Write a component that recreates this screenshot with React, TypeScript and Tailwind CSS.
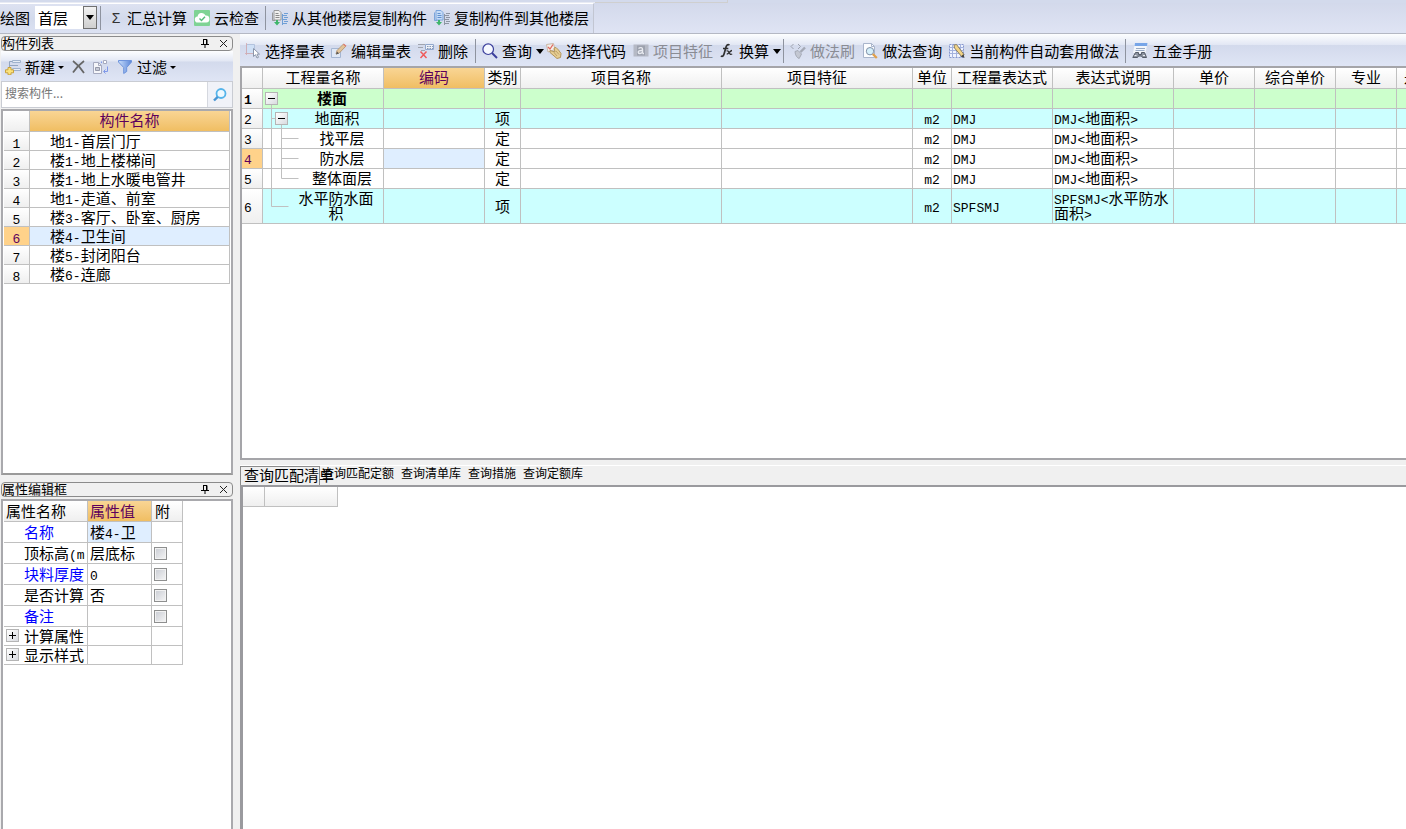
import React, { ReactNode } from "react";

const SANS = "font-['Noto_Sans_CJK_SC',sans-serif]";

/* Latin runs in grid text use half-width monospaced characters. */
function Mixed({ text }: { text: string }) {
  const parts = text.split(/([\x20-\x7e]+)/).filter(Boolean);
  return (
    <>
      {parts.map((p, i) =>
        /^[\x20-\x7e]+$/.test(p) ? (
          <span key={i} className="font-['Liberation_Mono',monospace] text-[13px] leading-[8px]">{p}</span>
        ) : (
          <span key={i}>{p}</span>
        )
      )}
    </>
  );
}

function Svg({ children, size = 16 }: { children: ReactNode; size?: number }) {
  return (
    <svg width={size} height={size} viewBox="0 0 16 16" fill="none" className="shrink-0" aria-hidden="true">
      {children}
    </svg>
  );
}

const Caret = ({ small }: { small?: boolean }) => (
  <svg width={small ? 6 : 8} height={small ? 3 : 5} viewBox="0 0 8 5" preserveAspectRatio="none" className="shrink-0" aria-hidden="true">
    <path d="M0 0h8L4 5z" fill="#000" />
  </svg>
);

const CloudIcon = () => (
  <Svg>
    <rect width="16" height="16" rx="1" fill="#7fd394" />
    <path d="M4 12.500a3 3 0 0 1-.4-6A4.200 4.200 0 0 1 11.600 5.500a3.500 3.500 0 0 1 .6 7z" fill="#fff" />
    <path d="M5.500 8.500l2 2 3.500-3.800" stroke="#55bb78" strokeWidth="1.400" />
  </Svg>
);

const CopyFloorIcon = ({ blue }: { blue?: boolean }) => (
  <Svg>
    <path d="M2 .5h5l2 2V10H2z" fill={blue ? "#c6dcf7" : "#f0f0ee"} stroke={blue ? "#7ba5dc" : "#999"} />
    <path d="M.5 2.500v8h3" stroke={blue ? "#7ba5dc" : "#999"} />
    <path d="M3.500 3.500h3M3.500 5.500h4M3.500 7.500h4" stroke={blue ? "#5f8fce" : "#8a8a8a"} />
    <path d="M4 10h2v2h2l-3 3.500L2 12h2z" fill="#3fb56b" />
    <path d="M10.500 4v11M12 3.500h4M11 5.500h4M12 7.500h4M11 9.500h4M12 11.500h4M11 13.500h4" stroke={blue ? "#8d95a3" : "#6f9fd6"} />
  </Svg>
);

const NewIcon = () => (
  <Svg>
    <path d="M7.500 1.500h8v2h-8zM7.500 9.500h8v2h-8z" fill="#e7edf6" stroke="#a0b2cc" />
    <path d="M7 2.500H4.500v6M4.500 6.500H13" stroke="#93a5c0" />
    <path d="M3 8.500h3v2.300h2.500v3H6v2H3v-2H.5v-3H3z" fill="#fbe37c" stroke="#c9a23c" />
  </Svg>
);

const CopyIcon = () => (
  <Svg>
    <path d="M.5 3.500h5l3 3v8h-8z" fill="#f4f5f9" stroke="#a6aabf" />
    <path d="M5.500 3.500v3h3" stroke="#a6aabf" />
    <path d="M2.500 8.500h4v3h-4z" fill="#c7cad6" stroke="#9599aa" />
    <path d="M10.500 1.500h3v3h-3z" fill="#fff" stroke="#a6aabf" />
    <path d="M8.500 4V2.500M14.500 7.500v5h-3.500M12.500 10.500l-2 2 2 2" stroke="#7f98e8" />
  </Svg>
);

const FilterIcon = () => (
  <Svg>
    <defs>
      <linearGradient id="funnel" x1="0" x2="1">
        <stop offset="0" stopColor="#c6dcfb" />
        <stop offset="1" stopColor="#5b86d8" />
      </linearGradient>
    </defs>
    <path d="M1.500 1.500h13v1.500L9.700 8.500v4l-3 2v-6L1.500 3z" fill="url(#funnel)" stroke="#6d93dc" />
  </Svg>
);

const SelectTableIcon = () => (
  <Svg>
    <path d="M1.500 1.500h8v9h-8z" fill="#cfe0f6" stroke="#b3c3de" />
    <path d="M1.500 0v12M0 10.500h9" stroke="#d3a9ae" strokeWidth=".8" />
    <path d="M8.500 5.500v8l2-1.800 1.500 3.300 1.500-.7-1.500-3.200h2.500z" fill="#fff" stroke="#8b96aa" />
  </Svg>
);

const EditIcon = () => (
  <Svg>
    <path d="M.5 5.500h9v9h-9z" fill="#dfe8f6" stroke="#a5b6d2" />
    <path d="M5 11l1-3.500L12.500 1l2.300 2.200L8.300 10z" fill="#e2c49a" stroke="#b08f6a" strokeWidth=".8" />
    <path d="M5 11.500l1-3 2 2z" fill="#555" />
    <path d="M12 1.500L13 .7l2.500 2-.9 1z" fill="#df7c72" />
  </Svg>
);

const DeleteIcon = () => (
  <Svg>
    <path d="M0 1.500h7M0 4.500h5M3 7.500h4" stroke="#a0a4ae" />
    <path d="M7.500 1.500h8v5h-8z" fill="#edf1f8" stroke="#92a8cd" />
    <path d="M9 3.500h6M9 5.500h6" stroke="#8797b5" strokeDasharray="1.500 1" />
    <path d="M2.500 8.500l6 6.500M8.500 8.500l-6 6.500" stroke="#ef5a5a" strokeWidth="1.500" />
  </Svg>
);

const SearchIcon = ({ light }: { light?: boolean }) =>
  light ? (
    <Svg>
      <circle cx="9" cy="6.500" r="4.500" fill="#eef9ff" stroke="#55b4ea" strokeWidth="1.800" />
      <path d="M5.700 9.800L2 13.500" stroke="#4795d3" strokeWidth="2.400" />
    </Svg>
  ) : (
    <Svg>
      <circle cx="6.200" cy="6.200" r="5.300" fill="#f5f8ff" stroke="#3b3f9c" strokeWidth="1.200" />
      <path d="M10 10l5 5" stroke="#3b3f9c" strokeWidth="2" />
    </Svg>
  );

const CodeIcon = () => (
  <Svg>
    <path d="M.5 1.500l7-1 1.500 6-7 2.500z" fill="#f4eee8" stroke="#c9b7a7" />
    <path d="M2 4l2 2 3-4.500" stroke="#e0685e" strokeWidth="1.300" />
    <path d="M4 7.500l5 1.500-1-4 2-.5 2.500 2.500 2.500 3.500-.5 4-3.500 1-7-6z" fill="#e6cd92" stroke="#b3955c" />
    <path d="M8 9.500l3 3.500M10 8l3 3.500" stroke="#b3955c" strokeWidth=".8" />
  </Svg>
);

const FeatureIcon = () => (
  <Svg>
    <path d="M.5 1.500h15v12H.5z" fill="#b5b9c5" />
    <path d="M4 2.500h8v10H4z" fill="#9ca1ae" />
    <path d="M5.500 5.500c2-1.500 4-1 4 .8v4.200M9.500 7.500c-3-.2-4.500.6-4.200 2 .3 1.500 2.800 1.300 4.200-.3M9.500 10.500h1.500" stroke="#e8eaf0" strokeWidth="1.400" />
  </Svg>
);

const FxIcon = () => (
  <Svg>
    <path d="M10.500 2C8.500.8 7.300 2.500 6.600 5.500l-1.400 5c-.6 2.500-1.600 3.300-3.400 2.500M4 5.500h5.300" stroke="#303030" strokeWidth="1.700" />
    <path d="M7.500 8c1.800-.6 2.200.4 2.700 1.700s1.200 2 3 1.300M13 7.500c-2 0-3 3.500-5.300 3.700" stroke="#303030" strokeWidth="1.300" />
  </Svg>
);

const BrushIcon = () => (
  <Svg>
    <path d="M3.500 1L1 3.500 3.500 6M8 1l2.500 2.500L8 6" stroke="#9da2ae" />
    <path d="M15 4.500L10.500 9" stroke="#a4a9b5" strokeWidth="2.400" />
    <path d="M5 8.500l3-1 3.500 3.500-2.300 4.500c-2-.5-4-3-4.200-7z" fill="#c3c7d2" stroke="#a4a9b5" />
  </Svg>
);

const MethodQueryIcon = () => (
  <Svg>
    <path d="M1.500.5h8l3 3v11h-11z" fill="#fcfdff" stroke="#a9b5cb" />
    <path d="M9.500.5v3h3" stroke="#a9b5cb" />
    <circle cx="8" cy="8.200" r="3.700" fill="#d5effa" stroke="#8291a8" />
    <path d="M10.800 11l4 4" stroke="#e0a04b" strokeWidth="2.400" />
  </Svg>
);

const AutoIcon = () => (
  <Svg>
    <path d="M.5 1.500h14v13H.5z" fill="#eff3ff" stroke="#8596ce" strokeDasharray="2 1" />
    <path d="M0 4.500h15M0 7.500h15M0 10.500h15M3.500 1v13M7.500 1v13M11.500 1v13" stroke="#a3b2dd" />
    <path d="M5 2l2.500-.5L15 11.500l-2 2.500L5.500 5z" fill="#f1d385" stroke="#8a8068" />
    <path d="M12 13.500L14.500 11l1 4z" fill="#444" />
  </Svg>
);

const HardwareIcon = () => (
  <Svg>
    <path d="M3 0h12.500l-2 10H1z" fill="#f3f6fb" />
    <path d="M3 0h12.500L15 3H2.500z" fill="#77a5e8" />
    <path d="M4 5.500h9M3.500 7.500h9" stroke="#98a9c3" />
    <path d="M3.500 9.500h3v2h3v-2h3l2 5h-4l-1-1.500h-3L5.500 14.500H.8z" fill="#8d94a1" stroke="#555c68" />
    <path d="M2.500 12.500h2M11 12.500h2" stroke="#e8ecf2" />
  </Svg>
);

const Sep = () => <span className="h-6 w-px shrink-0 bg-[#8e939f]" />;

const BAR = "bg-[linear-gradient(#fdfeff_0%,#e2e7f4_34%,#d3daec_36%,#dfe5f5_100%)]";

function Tool({ icon, label, caret, small, disabled }: { icon?: ReactNode; label: string; caret?: boolean; small?: boolean; disabled?: boolean }) {
  return (
    <button
      type="button"
      disabled={disabled}
      className={`flex shrink-0 items-center whitespace-nowrap text-[15px] leading-5 ${disabled ? "text-[#8a8c94]" : "text-black"}`}
    >
      {icon}
      <span className={icon ? "ml-1" : ""}>{label}</span>
      {caret && <span className={small ? "ml-[3px] flex" : "ml-1 flex"}><Caret small={small} /></span>}
    </button>
  );
}

function PanelTitle({ title }: { title: string }) {
  return (
    <header className="flex h-[15px] shrink-0 items-center rounded-sm border border-[#8b8b8b] bg-[#f0f0f0] text-[13px] leading-[13px]">
      <h2 className="grow pb-[2px]">{title}</h2>
      <button type="button" aria-label="固定" className="mr-2.5">
        <svg width="8" height="9" viewBox="0 0 8 9" fill="none" className="block">
          <path d="M2 .5h4v5M2.500 0v6M5.500 0v6M0 5.500h8M4 6v3" stroke="#000" />
        </svg>
      </button>
      <button type="button" aria-label="关闭" className="mr-1">
        <svg width="9" height="9" viewBox="0 0 9 9" fill="none" className="block">
          <path d="M1 1l7 7M8 1l-7 7" stroke="#222" />
        </svg>
      </button>
    </header>
  );
}

const components = ["地1-首层门厅", "楼1-地上楼梯间", "楼1-地上水暖电管井", "地1-走道、前室", "楼3-客厅、卧室、厨房", "楼4-卫生间", "楼5-封闭阳台", "楼6-连廊"];

const HEAD = "bg-linear-to-b from-white to-[#efefef]";
const GOLD = "bg-linear-to-b from-[#f9d594] to-[#f0be62] text-[#5c005c]";
const LINE = "border-[#c0c0c0]";

function ComponentPanel() {
  return (
    <section className="flex h-[441px] shrink-0 flex-col pt-[2px]">
      <PanelTitle title="构件列表" />
      <div className={`flex h-[30px] shrink-0 items-center pt-[2px] pl-1 ${BAR}`}>
        <Tool icon={<NewIcon />} label="新建" caret small />
        <button type="button" aria-label="删除构件" className="ml-2">
          <svg width="13" height="14" viewBox="0 0 13 14" fill="none" className="block">
            <path d="M1 1c4 3 8 7 11 12M12 1C8 4 4 8 1 12.500" stroke="#666" strokeWidth="1.700" />
          </svg>
        </button>
        <button type="button" aria-label="复制构件" className="mx-2"><CopyIcon /></button>
        <Tool icon={<FilterIcon />} label="过滤" caret small />
      </div>
      <div className="flex h-[27px] shrink-0 items-stretch border border-[#c9ccd3] bg-[#f0f2f8]">
        <input
          type="text"
          aria-label="搜索构件"
          placeholder="搜索构件..."
          className="w-0 grow border-r border-[#d5d8df] bg-white pb-1 pl-[3px] text-[12px] leading-4 outline-none placeholder:text-[#777]"
        />
        <button type="button" aria-label="搜索" className="flex w-6 items-center justify-center"><SearchIcon light /></button>
      </div>
      <div className="mt-px grow border-2 border-[#a9a9ad] border-b-[#9a9a9a] bg-white px-px">
        <table className="w-full table-fixed border-separate border-spacing-0 text-[15px] leading-[15px]">
          <colgroup><col className="w-[26px]" /><col /></colgroup>
          <thead>
            <tr className="h-[21px]">
              <th className={`border-r border-b p-0 ${LINE} ${HEAD}`} />
              <th className={`border-r border-b px-0 pt-0 pb-[3px] font-normal ${LINE} ${GOLD}`}>构件名称</th>
            </tr>
          </thead>
          <tbody>
            {components.map((c, i) => (
              <tr key={c} className="h-[19px]">
                <td className={`border-r border-b p-0 text-center ${LINE} ${i === 5 ? "bg-[#ffd28a] text-[#5c005c]" : HEAD}`}><Mixed text={String(i + 1)} /></td>
                <td className={`border-r border-b pt-0 pr-0 pb-px pl-5 whitespace-nowrap ${LINE} ${i === 5 ? "bg-[#dfeeff]" : ""}`}><Mixed text={c} /></td>
              </tr>
            ))}
          </tbody>
        </table>
      </div>
    </section>
  );
}

type Prop = { name: string; value: string; blue?: boolean; check?: boolean; group?: boolean; active?: boolean };
const props: Prop[] = [
  { name: "名称", value: "楼4-卫", blue: true, active: true },
  { name: "顶标高(m", value: "层底标", check: true },
  { name: "块料厚度", value: "0", blue: true, check: true },
  { name: "是否计算", value: "否", check: true },
  { name: "备注", value: "", blue: true, check: true },
  { name: "计算属性", value: "", group: true },
  { name: "显示样式", value: "", group: true },
];

function PropertyPanel() {
  const cell = "border-r border-b pt-0 pr-0 pb-[2px] whitespace-nowrap";
  return (
    <section className="mt-[7px] flex grow flex-col">
      <PanelTitle title="属性编辑框" />
      <div className="mt-[2px] grow border-2 border-b-0 border-[#a9a9ad] bg-white pl-px">
        <table className="w-[179px] table-fixed border-separate border-spacing-0 text-[15px] leading-[15px]">
          <colgroup><col className="w-[84px]" /><col className="w-16" /><col className="w-[31px]" /></colgroup>
          <thead>
            <tr className="h-[21px] text-left">
              <th className={`${cell} pl-[2px] font-normal ${LINE} ${HEAD}`}>属性名称</th>
              <th className={`${cell} pl-[2px] font-normal ${LINE} ${GOLD}`}>属性值</th>
              <th className={`${cell} pl-[3px] font-normal ${LINE} ${HEAD}`}>附</th>
            </tr>
          </thead>
          <tbody>
            {props.map((p) => (
              <tr key={p.name} className={p.group ? "h-[19px]" : "h-[21px]"}>
                <td className={`${cell} pl-0 ${LINE} ${p.blue ? "text-[#0000ff]" : ""}`}>
                  <div className="flex items-center">
                    <span className="flex w-5 shrink-0 pt-px pl-[2px]">{p.group && <Toggle plus />}</span>
                    <span><Mixed text={p.name} /></span>
                  </div>
                </td>
                <td className={`${cell} pl-[2px] ${LINE} ${p.active ? "bg-[#dfeeff]" : ""}`}><Mixed text={p.value} /></td>
                <td className={`border-r border-b p-0 ${LINE}`}>
                  {p.check && (
                    <input type="checkbox" aria-label={`附加 ${p.name}`} className="ml-[2px] block size-[13px] appearance-none border border-[#8e8f8f] bg-linear-to-br from-[#c9ccd3] to-[#f6f6f6] shadow-[inset_0_0_0_1px_#f2f2f2]" />
                  )}
                </td>
              </tr>
            ))}
          </tbody>
        </table>
      </div>
    </section>
  );
}

function Toggle({ plus }: { plus?: boolean }) {
  return (
    <button type="button" aria-label={plus ? "展开" : "折叠"} className="size-[13px] border border-[#b5b5b5] bg-linear-to-br from-white to-[#d9dbe0]">
      <svg width="11" height="11" viewBox="0 0 11 11" className="block" aria-hidden="true">
        <path d={plus ? "M2 5.500h7M5.500 2v7" : "M2 5.500h7"} stroke="#000" />
      </svg>
    </button>
  );
}

const columns: { label: string; width: string }[] = [
  { label: "", width: "w-[21px]" },
  { label: "工程量名称", width: "w-[121px]" },
  { label: "编码", width: "w-[101px]" },
  { label: "类别", width: "w-[36px]" },
  { label: "项目名称", width: "w-[201px]" },
  { label: "项目特征", width: "w-[191px]" },
  { label: "单位", width: "w-[39px]" },
  { label: "工程量表达式", width: "w-[101px]" },
  { label: "表达式说明", width: "w-[121px]" },
  { label: "单价", width: "w-[81px]" },
  { label: "综合单价", width: "w-[81px]" },
  { label: "专业", width: "w-[61px]" },
  { label: "是否手动", width: "w-[75px]" },
];

type Row = { name: string; kind: string; unit: string; expr: string; desc: string; tone: string; indent: string; tree: ReactNode };

const T = "#c0c0c0";
const Tree = ({ d, tall }: { d: string; tall?: boolean }) => (
  <svg width="40" height={tall ? 35 : 20} fill="none" className="absolute top-0 left-0" aria-hidden="true">
    <path d={d} stroke={T} />
  </svg>
);

const rows: Row[] = [
  { name: "楼面", kind: "", unit: "", expr: "", desc: "", tone: "bg-[#ccffcc] font-bold", indent: "pl-[18px]",
    tree: <><Tree d="M8.500 15v5" /><span className="absolute top-[3px] left-[2px] flex"><Toggle /></span></> },
  { name: "地面积", kind: "项", unit: "m2", expr: "DMJ", desc: "DMJ<地面积>", tone: "bg-[#ccffff]", indent: "pl-[28px]",
    tree: <><Tree d="M8.500 0v20M8.500 9.500h4M18.500 15v5" /><span className="absolute top-[3px] left-[12px] flex"><Toggle /></span></> },
  { name: "找平层", kind: "定", unit: "m2", expr: "DMJ", desc: "DMJ<地面积>", tone: "bg-white", indent: "pl-[38px]", tree: <Tree d="M8.500 0v20M18.500 0v20M18.500 9.500h17" /> },
  { name: "防水层", kind: "定", unit: "m2", expr: "DMJ", desc: "DMJ<地面积>", tone: "bg-white", indent: "pl-[38px]", tree: <Tree d="M8.500 0v20M18.500 0v20M18.500 9.500h17" /> },
  { name: "整体面层", kind: "定", unit: "m2", expr: "DMJ", desc: "DMJ<地面积>", tone: "bg-white", indent: "pl-[38px]", tree: <Tree d="M8.500 0v20M18.500 0v9.500h17" /> },
  { name: "水平防水面积", kind: "项", unit: "m2", expr: "SPFSMJ", desc: "SPFSMJ<水平防水面积>", tone: "bg-[#ccffff]", indent: "pr-1 pl-[30px]", tree: <Tree tall d="M8.500 0v17.500h17" /> },
];

function QuantityTable() {
  const cell = `border-r border-b px-0 pt-0 pb-[2px] ${LINE}`;
  return (
    <table className="w-[1230px] table-fixed border-separate border-spacing-0 text-[15px] leading-[15px]">
      <colgroup>{columns.map((c) => <col key={c.label} className={c.width} />)}</colgroup>
      <thead>
        <tr className="h-[21px]">
          {columns.map((c, i) => (
            <th key={c.label} className={`px-0 pt-0 pb-[3px] font-normal whitespace-nowrap border-r border-b ${LINE} ${i === 2 ? GOLD : HEAD}`}>{c.label}</th>
          ))}
        </tr>
      </thead>
      <tbody>
        {rows.map((r, i) => (
          <tr key={r.name} className={`${i === 5 ? "h-[35px]" : "h-5"} ${r.tone}`}>
            <td className={`${cell} ${i === 3 ? "bg-[#ffd28a] text-[#5c005c]" : HEAD}`}><span className="pl-[2px]"><Mixed text={String(i + 1)} /></span></td>
            <td className={`${cell} relative text-center`}>
              {r.tree}
              <div className={r.indent}>{r.name}</div>
            </td>
            <td className={`${cell} ${i === 3 ? "bg-[#dfeeff]" : ""}`} />
            <td className={`${cell} text-center`}>{r.kind}</td>
            <td className={cell} />
            <td className={cell} />
            <td className={`${cell} text-center`}><Mixed text={r.unit} /></td>
            <td className={cell}><span className="pl-px"><Mixed text={r.expr} /></span></td>
            <td className={cell}><div className="pl-px"><Mixed text={r.desc} /></div></td>
            <td className={cell} />
            <td className={cell} />
            <td className={cell} />
            <td className={cell} />
          </tr>
        ))}
      </tbody>
    </table>
  );
}

const tabs = ["查询匹配定额", "查询清单库", "查询措施", "查询定额库"];

export default function App() {
  return (
    <div className={`flex h-screen flex-col overflow-hidden bg-[#f0f0f0] text-black ${SANS}`}>
      <div className="flex h-[3px] shrink-0 bg-[#d3daec]">
        <span className="w-[595px] border-b border-[#e8ebf4]" />
        <span className="w-[133px] border-r border-b border-[#cfcfcf]" />
      </div>
      <nav className="flex h-[31px] shrink-0 items-stretch border-b border-[#b4b8c4] bg-linear-to-b from-[#d3d9eb] to-[#dfe4f4]">
        <div className="flex items-center border-t border-r border-t-white border-r-[#c2c6d2] bg-linear-to-b from-[#dde2f1] via-[#d3daec] to-[#dce2f2] pr-1 pb-[2px]">
          <Tool label="绘图" />
          <span className="relative ml-[5px] flex h-[23px] w-[62px]">
            <select aria-label="楼层" className="w-full appearance-none bg-white pl-[3px] text-[15px] leading-5 outline-none">
              <option>首层</option>
            </select>
            <span className="pointer-events-none absolute top-0 right-0 flex h-[23px] w-[14px] items-center justify-center border border-[#707070] bg-linear-to-b from-[#f2f2f2] to-[#cfcfcf]"><Caret /></span>
          </span>
          <span className="mr-2 ml-[3px] flex"><Sep /></span>
          <Tool icon={<span className="w-[14px] text-center font-['Liberation_Sans',sans-serif] text-[14px] text-[#333]">Σ</span>} label="汇总计算" />
          <span className="w-[7px]" />
          <Tool icon={<CloudIcon />} label="云检查" />
          <span className="mx-1.5 flex"><Sep /></span>
          <Tool icon={<CopyFloorIcon />} label="从其他楼层复制构件" />
          <span className="w-[7px]" />
          <Tool icon={<CopyFloorIcon blue />} label="复制构件到其他楼层" />
        </div>
      </nav>

      <div className="flex min-h-0 grow">
        <aside className="flex w-[233px] shrink-0 flex-col pl-px">
          <ComponentPanel />
          <PropertyPanel />
        </aside>

        <main className="ml-[7px] flex min-w-0 grow flex-col">
          <div className={`flex h-8 shrink-0 items-center overflow-hidden pt-[2px] pl-[5px] ${BAR}`}>
            <Tool icon={<SelectTableIcon />} label="选择量表" />
            <span className="w-[6px] shrink-0" />
            <Tool icon={<EditIcon />} label="编辑量表" />
            <span className="w-[7px] shrink-0" />
            <Tool icon={<DeleteIcon />} label="删除" />
            <span className="mr-[6px] ml-[7px] flex"><Sep /></span>
            <Tool icon={<SearchIcon />} label="查询" caret />
            <span className="w-[2px] shrink-0" />
            <Tool icon={<CodeIcon />} label="选择代码" />
            <span className="w-[7px] shrink-0" />
            <Tool icon={<FeatureIcon />} label="项目特征" disabled />
            <span className="w-[6px] shrink-0" />
            <Tool icon={<FxIcon />} label="换算" caret />
            <span className="mr-[6px] ml-[2px] flex"><Sep /></span>
            <Tool icon={<BrushIcon />} label="做法刷" disabled />
            <span className="w-[7px] shrink-0" />
            <Tool icon={<MethodQueryIcon />} label="做法查询" />
            <span className="w-[7px] shrink-0" />
            <Tool icon={<AutoIcon />} label="当前构件自动套用做法" />
            <span className="mx-[6px] flex"><Sep /></span>
            <Tool icon={<HardwareIcon />} label="五金手册" />
          </div>

          <div className="h-[394px] shrink-0 overflow-hidden border-y-2 border-l-2 border-[#a5a5a9] bg-white">
            <QuantityTable />
          </div>

          <div role="tablist" className="mt-[5px] flex h-5 shrink-0 items-start border-t border-t-white bg-[#f0f0f0] text-[12px] leading-[14px]">
            <button type="button" role="tab" aria-selected="true" className="h-[19px] w-20 shrink-0 border border-b-0 border-[#8b8b8b] pb-[2px] pl-[3px] text-left text-[15px] leading-4 whitespace-nowrap">
              查询匹配清单
            </button>
            <div className="ml-[2px] flex gap-[7px]">
              {tabs.map((t) => (
                <button key={t} type="button" role="tab" aria-selected="false" className="whitespace-nowrap">{t}</button>
              ))}
            </div>
          </div>
          <div className="grow border-t-2 border-l-[3px] border-[#9a9a9e] bg-white">
            <div className="flex h-5">
              <span className={`w-[22px] border-r border-b ${LINE} ${HEAD}`} />
              <span className={`w-[73px] border-r border-b ${LINE} ${HEAD}`} />
            </div>
          </div>
        </main>
      </div>
    </div>
  );
}
